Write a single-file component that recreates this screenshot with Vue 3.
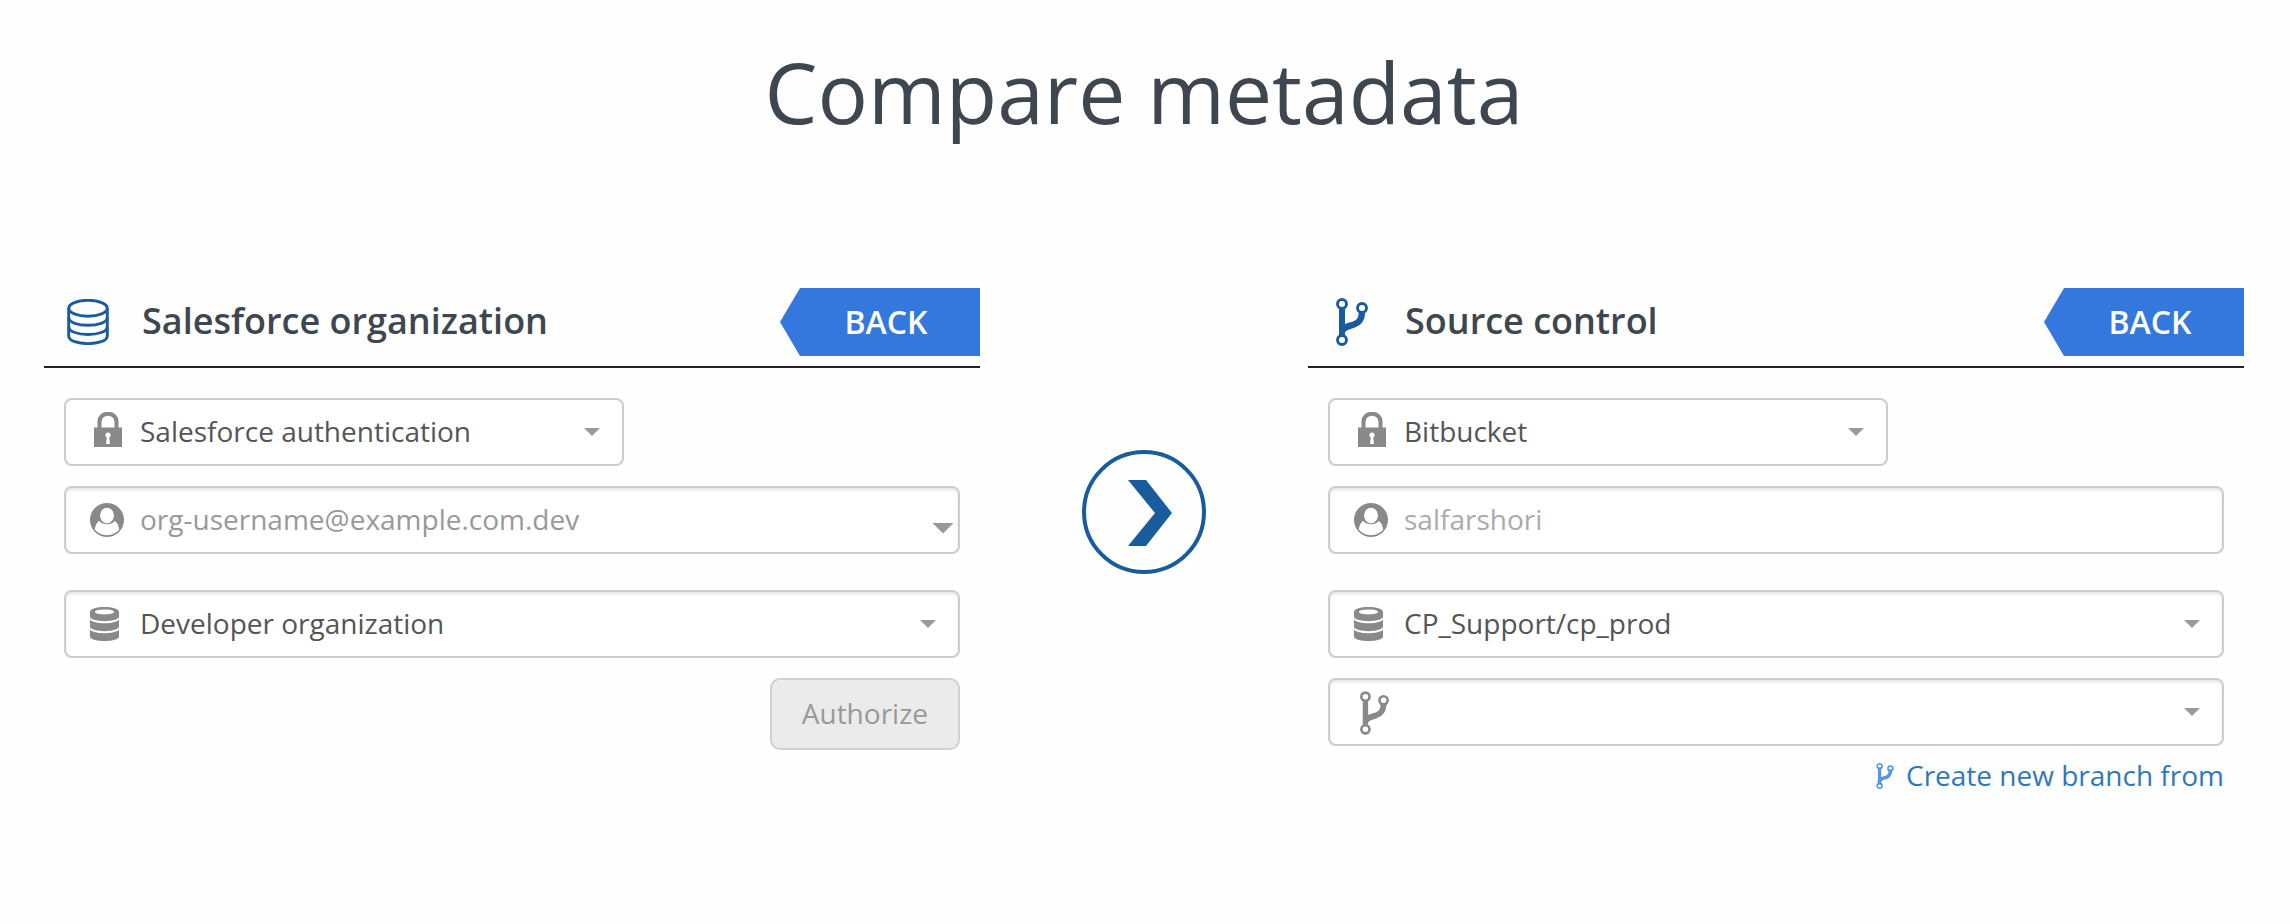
<template>
  <main class="compare">
    <!-- shared icon shapes -->
    <svg class="sprite" aria-hidden="true">
      <symbol id="icon-lock" viewBox="0 0 28 35">
        <path d="M5.5 17V10C5.5 -1 22.5 -1 22.5 10V17" fill="none" stroke="currentColor" stroke-width="4" />
        <path d="M0 15.500H28V35H0Z" fill="currentColor" />
        <circle cx="14" cy="23" r="2.600" fill="#fff" />
        <path d="M13 24H15L16 32H12Z" fill="#fff" />
      </symbol>
      <symbol id="icon-user" viewBox="0 0 34 34">
        <circle cx="17" cy="17" r="17" fill="currentColor" />
        <ellipse cx="17" cy="12.500" rx="7" ry="7.700" fill="#fff" />
        <path d="M9.200 18C6.500 19.500 5.200 23 4.800 26.500C8 30.500 12.500 32.200 17 32.200C21.500 32.200 26 30.500 29.200 26.500C28.800 23 27.500 19.500 24.800 18C21 22.300 13 22.300 9.200 18Z" fill="#fff" />
      </symbol>
      <symbol id="icon-database" viewBox="0 0 29 34">
        <path fill="currentColor" fill-rule="evenodd" d="M0 5C0 -1.600 29 -1.600 29 5V10C27 15.500 2 15.500 0 10ZM5 5C5 8.200 24 8.200 24 5C24 1.800 5 1.800 5 5Z" />
        <path fill="currentColor" d="M0 12.600C4 17.600 25 17.600 29 12.600V20C27 25.500 2 25.500 0 20Z" />
        <path fill="currentColor" d="M0 22.500C4 27.500 25 27.500 29 22.500V30C27 35.300 2 35.300 0 30Z" />
      </symbol>
      <symbol id="icon-database-line" viewBox="0 0 42 46">
        <g fill="none" stroke="currentColor" stroke-width="2.900">
          <ellipse cx="21" cy="9.300" rx="19.300" ry="8" />
          <path d="M1.700 9V37C1.700 47.200 40.300 47.200 40.300 37V9" />
          <path d="M1.700 18.500C1.700 28.800 40.300 28.800 40.300 18.500" />
          <path d="M1.700 27.700C1.700 38 40.300 38 40.300 27.700" />
        </g>
      </symbol>
      <symbol id="icon-branch" viewBox="0 0 32 48">
        <g fill="none" stroke="currentColor">
          <g stroke-width="2.900">
            <circle cx="6" cy="6" r="4.500" />
            <circle cx="26" cy="10" r="4.500" />
            <circle cx="6" cy="42" r="4.500" />
          </g>
          <path d="M6 11V37" stroke-width="6" />
          <path d="M26 15C25.500 22 23 24.800 18 26.500C12 28.300 8 29 6 33" stroke-width="6.500" />
        </g>
      </symbol>
    </svg>

    <h1 class="title">Compare metadata</h1>

    <div class="columns">
      <section class="panel">
        <header class="panel-header">
          <svg class="header-icon database-line"><use href="#icon-database-line" /></svg>
          <h2>Salesforce organization</h2>
          <button type="button" class="back">BACK</button>
        </header>

        <form class="fields" @submit.prevent>
          <div class="field short">
            <span class="icon-box"><svg class="lock"><use href="#icon-lock" /></svg></span>
            <select v-model="authentication" aria-label="Authentication">
              <option>Salesforce authentication</option>
              <option>OAuth</option>
            </select>
            <span class="caret"></span>
          </div>
          <div class="field inset account">
            <span class="icon-box"><svg class="user"><use href="#icon-user" /></svg></span>
            <input v-model="orgUsername" type="text" placeholder="org-username@example.com.dev" aria-label="Organization username" />
            <button type="button" class="toggle" aria-label="Show usernames"><span class="caret large"></span></button>
          </div>
          <div class="field inset">
            <span class="icon-box"><svg class="database"><use href="#icon-database" /></svg></span>
            <select v-model="orgType" aria-label="Organization type">
              <option>Developer organization</option>
              <option>Sandbox</option>
            </select>
            <span class="caret"></span>
          </div>
          <button type="button" class="authorize" :disabled="!orgUsername">Authorize</button>
        </form>
      </section>

      <div class="direction">
        <svg viewBox="0 0 124 124" role="img" aria-label="Compare to">
          <circle cx="62" cy="62" r="60" fill="none" stroke="currentColor" stroke-width="4" />
          <path d="M46 30H64L90 63L64 96H46L73 63Z" fill="currentColor" />
        </svg>
      </div>

      <section class="panel">
        <header class="panel-header">
          <svg class="header-icon branch-line"><use href="#icon-branch" /></svg>
          <h2>Source control</h2>
          <button type="button" class="back">BACK</button>
        </header>

        <form class="fields" @submit.prevent>
          <div class="field short">
            <span class="icon-box"><svg class="lock"><use href="#icon-lock" /></svg></span>
            <select v-model="provider" aria-label="Source control provider">
              <option>Bitbucket</option>
              <option>GitHub</option>
            </select>
            <span class="caret"></span>
          </div>
          <div class="field inset account">
            <span class="icon-box"><svg class="user"><use href="#icon-user" /></svg></span>
            <input class="locked" type="text" value="salfarshori" aria-label="Source control username" readonly />
          </div>
          <div class="field inset">
            <span class="icon-box"><svg class="database"><use href="#icon-database" /></svg></span>
            <select v-model="repository" aria-label="Repository">
              <option>CP_Support/cp_prod</option>
            </select>
            <span class="caret"></span>
          </div>
          <div class="field inset">
            <span class="icon-box"><svg class="branch"><use href="#icon-branch" /></svg></span>
            <select v-model="branch" aria-label="Branch">
              <option value=""></option>
              <option value="master">master</option>
            </select>
            <span class="caret"></span>
          </div>
          <a class="new-branch" href="#">
            <svg><use href="#icon-branch" /></svg>
            <span>Create new branch from</span>
          </a>
        </form>
      </section>
    </div>
  </main>
</template>

<script setup>
import { ref } from 'vue';

const authentication = ref('Salesforce authentication');
const orgUsername = ref('');
const orgType = ref('Developer organization');
const provider = ref('Bitbucket');
const repository = ref('CP_Support/cp_prod');
const branch = ref('');
</script>

<style>
body {
  background: #fefefe;
}
</style>

<style scoped>
.compare {
  box-sizing: border-box;
  padding: 32px 46px 40px 44px;
  font-family: "Open Sans", "Noto Sans", sans-serif;
  font-size: 28px;
  color: #555;
}

.compare * {
  box-sizing: border-box;
}

.sprite {
  position: absolute;
  width: 0;
  height: 0;
}

.title {
  margin: 0 0 136px;
  font-size: 84px;
  font-weight: 400;
  line-height: 120px;
  text-align: center;
  color: #3e474f;
}

.columns {
  display: grid;
  grid-template-columns: 1fr 328px 1fr;
}

.panel-header {
  display: flex;
  height: 80px;
  padding-bottom: 10px;
  border-bottom: 2px solid #222;
}

.header-icon {
  height: 48px;
  margin: 10px 0 0 23px;
  color: #185c9e;
}

.database-line {
  width: 42px;
  height: 46px;
  margin-top: 11px;
}

.branch-line {
  width: 32px;
  margin-left: 28px;
}

.panel-header h2 {
  flex: 1;
  margin: 0 0 0 33px;
  font-size: 36px;
  font-weight: 600;
  line-height: 66px;
  color: #3e474f;
}

.branch-line + h2 {
  margin-left: 37px;
}

.back {
  width: 200px;
  height: 68px;
  padding: 0 0 2px 12px;
  border: 0;
  background: #3478dd;
  clip-path: polygon(0 50%, 20px 0, 100% 0, 100% 100%, 20px 100%);
  font: inherit;
  font-size: 32px;
  font-weight: 600;
  color: #fff;
  cursor: pointer;
}

.fields {
  display: flex;
  flex-direction: column;
  gap: 20px;
  padding: 30px 20px 0;
}

.field {
  display: flex;
  align-items: center;
  height: 68px;
  border: 2px solid #ccc;
  border-radius: 8px;
  background: #fff;
}

.field.short {
  width: 62.5%;
}

.field.inset {
  box-shadow: inset 0 2px 3px rgba(0, 0, 0, 0.1);
}

.field.account {
  margin-bottom: 16px;
}

.icon-box {
  flex: none;
  width: 74px;
  height: 44px;
  padding-left: 24px;
  display: flex;
  align-items: center;
  color: #898989;
}

.lock {
  width: 28px;
  height: 35px;
  margin: 0 0 6px 4px;
}

.user {
  width: 34px;
  height: 34px;
}

.database {
  width: 29px;
  height: 34px;
}

.branch {
  width: 29px;
  height: 44px;
  margin: 2px 0 0 6px;
}

.field select,
.field input {
  flex: 1;
  min-width: 0;
  height: 100%;
  padding: 0 0 2px;
  border: 0;
  outline: 0;
  appearance: none;
  background: transparent;
  font: inherit;
  color: #555;
}

.field input::placeholder {
  color: #999;
  opacity: 1;
}

.field input.locked {
  color: #aaa;
}

.caret {
  flex: none;
  width: 16px;
  height: 8px;
  margin-right: 22px;
  background: #999;
  clip-path: polygon(0 0, 100% 0, 50% 100%);
}

.toggle {
  align-self: stretch;
  display: flex;
  align-items: center;
  padding: 16px 4px 0 0;
  border: 0;
  background: none;
  cursor: pointer;
}

.caret.large {
  width: 22px;
  height: 11px;
  margin: 0;
}

.authorize {
  align-self: flex-end;
  height: 72px;
  padding: 0 30px 2px;
  border: 2px solid #d0d0d0;
  border-radius: 10px;
  background: #ebebeb;
  font: inherit;
  color: #999;
}

.direction {
  padding-top: 162px;
  text-align: center;
  color: #185c9e;
}

.direction svg {
  width: 124px;
  height: 124px;
}

.new-branch {
  display: flex;
  align-self: flex-end;
  align-items: center;
  gap: 12px;
  margin-top: -8px;
  line-height: 34px;
  text-decoration: none;
  color: #2e79b9;
}

.new-branch svg {
  width: 18px;
  height: 26px;
  margin-top: 2px;
  stroke-linecap: square;
  color: #5596dc;
}
</style>
